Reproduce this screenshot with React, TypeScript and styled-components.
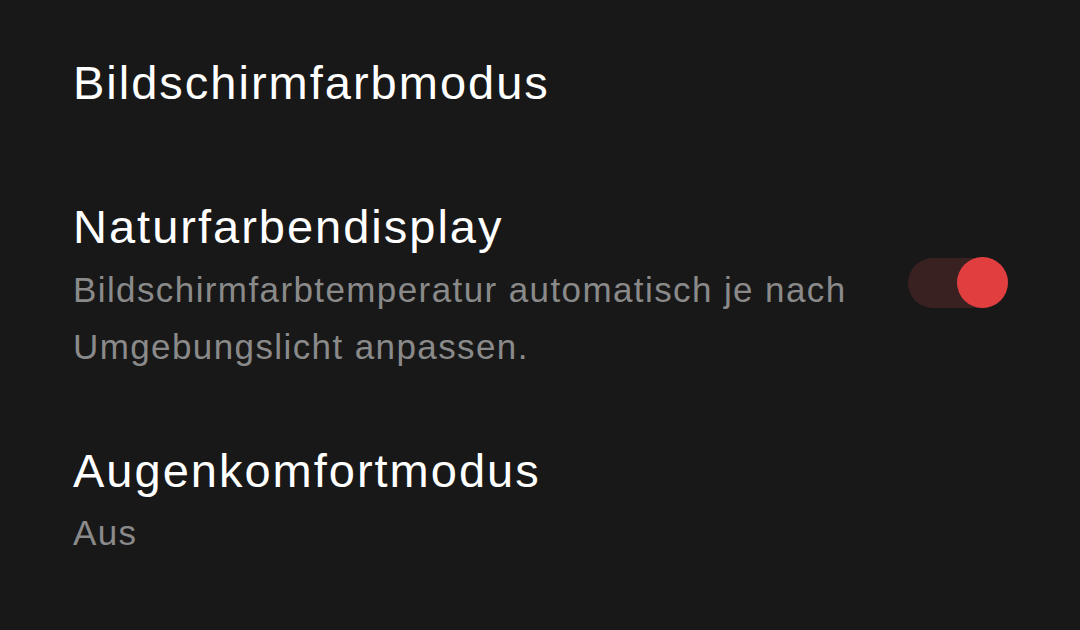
import React from 'react';
import styled, { createGlobalStyle } from 'styled-components';

const GlobalStyle = createGlobalStyle`
  html, body {
    margin: 0;
    padding: 0;
    background: #181818;
  }
  body {
    font-family: "Liberation Sans", Arial, sans-serif;
  }
`;

const Page = styled.div`
  width: 1080px;
  height: 630px;
  background: #181818;
  box-sizing: border-box;
  padding: 53px 72px 0 73px;
  display: flex;
  flex-direction: column;
`;

const SectionHeader = styled.h2`
  margin: 0 0 84px 0;
  font-size: 47px;
  font-weight: 400;
  line-height: 60px;
  letter-spacing: 2px;
  color: #ffffff;
`;

const Item = styled.div`
  display: flex;
  align-items: center;
  justify-content: space-between;
  margin-bottom: 66px;
`;

const ItemText = styled.div`
  display: flex;
  flex-direction: column;
`;

const ItemTitle = styled.div`
  font-size: 47px;
  line-height: 60px;
  letter-spacing: 2px;
  color: #ffffff;
`;

const ItemSummary = styled.div<{ $gap?: number }>`
  margin-top: ${({ $gap }) => $gap ?? 3}px;
  font-size: 35px;
  line-height: 57px;
  letter-spacing: 1.4px;
  color: #8a8a8a;
  max-width: 800px;
`;

const Track = styled.div<{ $on: boolean }>`
  width: 100px;
  height: 50px;
  margin-bottom: 7px;
  border-radius: 25px;
  background: ${({ $on }) => ($on ? '#3a2121' : '#333')};
  position: relative;
  flex-shrink: 0;
`;

const Knob = styled.div<{ $on: boolean }>`
  position: absolute;
  top: 0;
  left: ${({ $on }) => ($on ? '49px' : '0')};
  width: 51px;
  height: 51px;
  margin-top: -0.5px;
  border-radius: 50%;
  background: ${({ $on }) => ($on ? '#e13f3f' : '#888')};
`;

const Toggle: React.FC<{ on: boolean }> = ({ on }) => (
  <Track $on={on}>
    <Knob $on={on} />
  </Track>
);

export default function App() {
  return (
    <>
      <GlobalStyle />
      <Page>
        <SectionHeader>Bildschirmfarbmodus</SectionHeader>
        <Item>
          <ItemText>
            <ItemTitle>Naturfarbendisplay</ItemTitle>
            <ItemSummary $gap={4}>
              Bildschirmfarbtemperatur automatisch je nach Umgebungslicht anpassen.
            </ItemSummary>
          </ItemText>
          <Toggle on />
        </Item>
        <Item>
          <ItemText>
            <ItemTitle>Augenkomfortmodus</ItemTitle>
            <ItemSummary>Aus</ItemSummary>
          </ItemText>
        </Item>
      </Page>
    </>
  );
}
